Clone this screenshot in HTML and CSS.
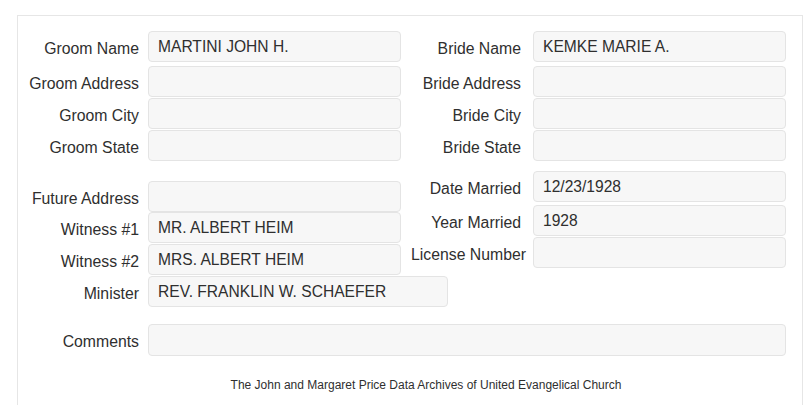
FILE: index.html
```html
<!DOCTYPE html>
<html>
<head>
<meta charset="utf-8">
<link rel="stylesheet" href="styles.css">
</head>
<body>
<div class="panel">
  <div class="section s1">
    <div class="col left">
      <div class="field first"><div class="label">Groom Name</div><div class="control">MARTINI JOHN H.</div></div>
      <div class="field"><div class="label">Groom Address</div><div class="control"></div></div>
      <div class="field"><div class="label">Groom City</div><div class="control"></div></div>
      <div class="field"><div class="label">Groom State</div><div class="control"></div></div>
    </div>
    <div class="col right">
      <div class="field first"><div class="label">Bride Name</div><div class="control">KEMKE MARIE A.</div></div>
      <div class="field"><div class="label">Bride Address</div><div class="control"></div></div>
      <div class="field"><div class="label">Bride City</div><div class="control"></div></div>
      <div class="field"><div class="label">Bride State</div><div class="control"></div></div>
    </div>
  </div>
  <div class="section s2">
    <div class="col left">
      <div class="field tight"><div class="label">Future Address</div><div class="control"></div></div>
      <div class="field"><div class="label">Witness #1</div><div class="control">MR. ALBERT HEIM</div></div>
      <div class="field"><div class="label">Witness #2</div><div class="control">MRS. ALBERT HEIM</div></div>
      <div class="field"><div class="label">Minister</div><div class="control wide">REV. FRANKLIN W. SCHAEFER</div></div>
    </div>
    <div class="col right">
      <div class="field loose"><div class="label">Date Married</div><div class="control">12/23/1928</div></div>
      <div class="field"><div class="label">Year Married</div><div class="control">1928</div></div>
      <div class="field"><div class="label">License Number</div><div class="control"></div></div>
    </div>
  </div>
  <div class="field comments"><div class="label">Comments</div><div class="control full"></div></div>
  <div class="footer">The John and Margaret Price Data Archives of United Evangelical Church</div>
</div>
</body>
</html>
```
FILE: styles.css
```css
html, body {
  margin: 0;
  padding: 0;
  background: #ffffff;
}
body {
  font-family: "Liberation Sans", Arial, sans-serif;
  color: #2f2f2f;
  overflow: hidden;
}
.panel {
  margin: 15px 0 0 17px;
  width: 784px;
  height: 389px;
  border: 1px solid #e6e6e6;
  border-bottom: none;
}
.section {
  display: flex;
  align-items: flex-start;
}
.s1 {
  padding-top: 15px;
}
.col {
  display: flex;
  flex-direction: column;
}
.col.left {
  width: 383px;
}
.col.right {
  width: 385px;
}
.s2 .col.left {
  padding-top: 19px;
}
.s2 .col.right {
  padding-top: 9px;
}
.field {
  display: flex;
  align-items: flex-start;
  margin-bottom: 1px;
}
.field.first {
  margin-bottom: 4px;
}
.field.tight {
  margin-bottom: 0;
}
.field.loose {
  margin-bottom: 3px;
}
.label {
  flex: none;
  box-sizing: border-box;
  padding: 8px 0 0 10px;
  width: 121px;
  margin-right: 9px;
  text-align: right;
  white-space: nowrap;
  font-size: 15.8px;
  line-height: 20px;
}
.right .label {
  width: 120px;
  margin-right: 12px;
}
.control {
  flex: none;
  box-sizing: border-box;
  width: 253px;
  height: 31px;
  padding: 5px 8px 0 9px;
  background: #f7f7f7;
  border: 1px solid #e4e4e4;
  border-radius: 4px;
  font-size: 15.6px;
  line-height: 20px;
  white-space: nowrap;
}
.control.wide {
  width: 300px;
}
.comments {
  margin-top: 16px;
}
.control.full {
  width: 638px;
  height: 32px;
}
.footer {
  margin-top: 21px;
  padding-left: 32px;
  text-align: center;
  font-size: 12px;
  line-height: 17px;
}
```
